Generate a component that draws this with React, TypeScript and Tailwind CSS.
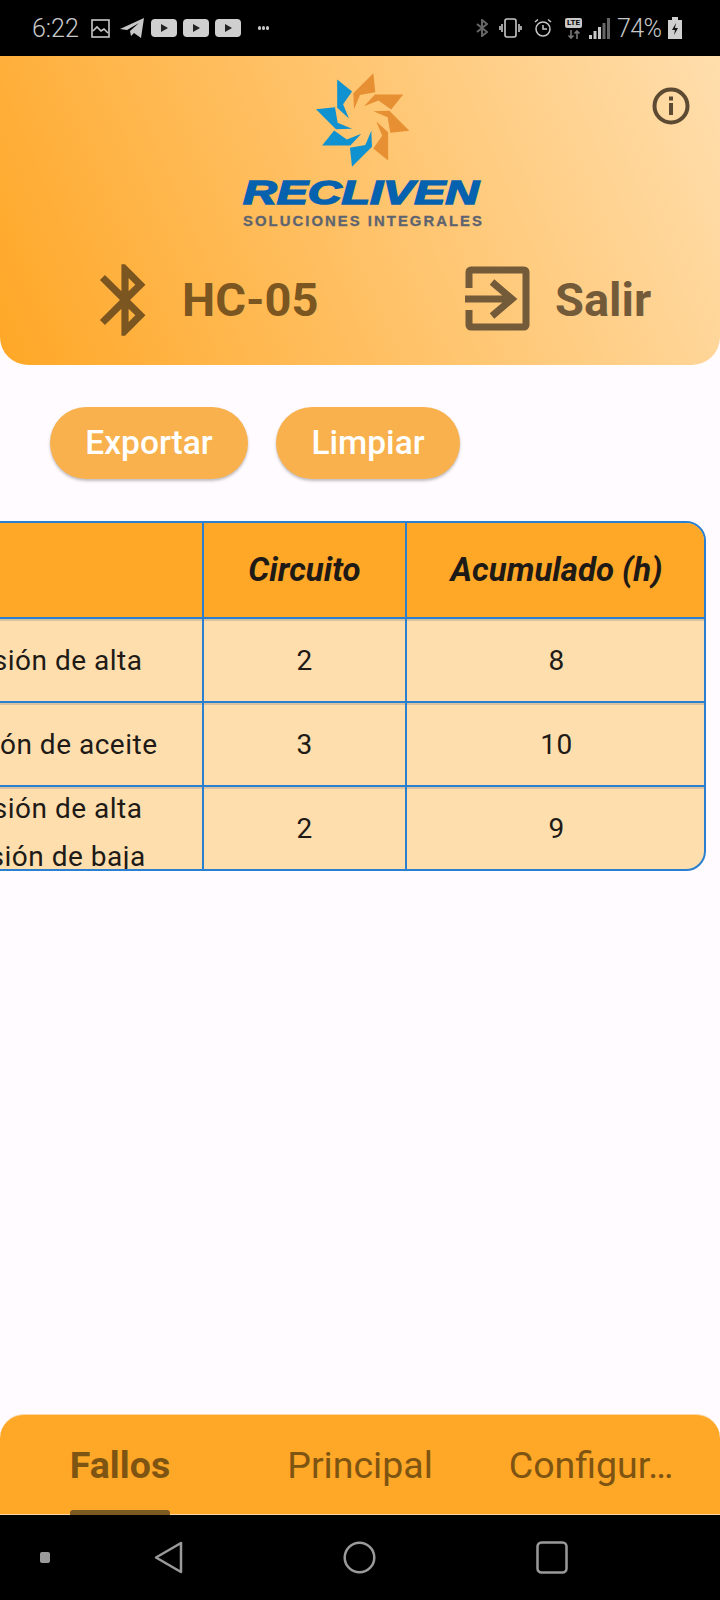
import React from "react";

const roboto = "font-['Roboto',sans-serif]";

const bladePoints = "460,40 466,97 420,105 402,148 400,100";

const Logo = () => (
    <svg width="244" height="160" viewBox="0 0 244 160" className="shrink-0">
        <g transform="translate(-20 -10) scale(0.3333)">
            {[0, 45, 90, 135, 180, 225, 270, 315].map((angle) => (
                <polygon
                    key={angle}
                    points={bladePoints}
                    fill={angle < 180 ? "#e68f33" : "#0f92cf"}
                    transform={`rotate(${angle} 428 180)`}
                />
            ))}
        </g>
        <text
            x="3"
            y="134"
            textLength="236"
            lengthAdjust="spacingAndGlyphs"
            fontFamily="'Liberation Sans', sans-serif"
            fontWeight="700"
            fontStyle="italic"
            fontSize="33"
            fill="#0661ae"
            stroke="#0661ae"
            strokeWidth="1.500"
        >
            RECLIVEN
        </text>
        <text
            x="3"
            y="156"
            textLength="241"
            lengthAdjust="spacingAndGlyphs"
            fontFamily="'Liberation Sans', sans-serif"
            fontWeight="700"
            fontSize="14.500"
            letterSpacing="2"
            fill="#5d6470"
            stroke="#5d6470"
            strokeWidth="0.300"
        >
            SOLUCIONES INTEGRALES
        </text>
    </svg>
);

const YoutubeIcon = () => (
    <svg width="26" height="18" viewBox="0 0 26 18">
        <rect width="26" height="18" rx="4" fill="#cfcfcf" />
        <path d="M10 5l7 4-7 4z" fill="#222" />
    </svg>
);

const StatusBar = () => (
    <div className={`h-14 shrink-0 bg-black flex items-center pl-8 text-[#c8c8c8] ${roboto}`}>
        <span className="text-[25px] leading-none w-[59px] font-light">6:22</span>
        <svg width="19" height="19" viewBox="0 0 19 19" fill="none" stroke="#c8c8c8" strokeWidth="1.6">
            <rect x="1" y="1" width="17" height="17" />
            <path d="M2 12l4-4 4 4 3-2 4 4" />
        </svg>
        <svg width="24" height="20" viewBox="0 0 24 20" className="ml-[10px]">
            <path d="M0 11L24 0l-3 20-7-5-3 3-1-5 9-8-12 7z" fill="#c8c8c8" />
        </svg>
        <div className="flex gap-[6px] ml-[7px]">
            <YoutubeIcon />
            <YoutubeIcon />
            <YoutubeIcon />
        </div>
        <div className="flex gap-[1px] ml-[17px]">
            <span className="w-[3px] h-[4px] rounded-full bg-[#c8c8c8]" />
            <span className="w-[3px] h-[4px] rounded-full bg-[#c8c8c8]" />
            <span className="w-[3px] h-[4px] rounded-full bg-[#c8c8c8]" />
        </div>
        <svg width="12" height="18" viewBox="0 0 12 18" fill="none" stroke="#666" strokeWidth="2" className="ml-[207px]">
            <path d="M1 5l10 8-5 4V1l5 4-10 8" />
        </svg>
        <svg width="23" height="20" viewBox="0 0 23 20" fill="none" stroke="#c8c8c8" strokeWidth="1.6" className="ml-[11px]">
            <rect x="6" y="1" width="11" height="18" rx="2" />
            <path d="M3 6v8M1 8v4M20 6v8M22 8v4" />
        </svg>
        <svg width="18" height="20" viewBox="0 0 18 20" fill="none" stroke="#c8c8c8" strokeWidth="1.5" className="ml-[12px]">
            <circle cx="9" cy="11" r="7" />
            <path d="M9 7v4h4M1 4l3-2.500M17 4l-3-2.500" />
        </svg>
        <div className="flex flex-col items-center w-[17px] ml-[13px] gap-[2px]">
            <span className="w-[17px] h-[10px] rounded-[2px] bg-[#c8c8c8] text-black text-[8px] leading-[10px] font-bold text-center">LTE</span>
            <svg width="14" height="9" viewBox="0 0 14 9" fill="none" stroke="#777" strokeWidth="1.6">
                <path d="M4 0v8M1.500 5.500L4 8l2.500-2.500M10 9V1M7.500 3.500L10 1l2.500 2.500" />
            </svg>
        </div>
        <svg width="21" height="21" viewBox="0 0 21 21" className="ml-[7px]">
            <path d="M0 17h3v4H0zM4.500 13h3v8h-3zM9 9h3v12H9z" fill="#c8c8c8" />
            <path d="M13.500 5h3v16h-3zM18 0h3v21h-3z" fill="#666" />
        </svg>
        <span className="text-[25px] leading-none ml-[7px] w-[42px] font-light tracking-tight">74%</span>
        <svg width="14" height="22" viewBox="0 0 14 22" className="ml-[9px]">
            <path d="M4 0h6v3h4v19H0V3h4z" fill="#cfcfcf" />
            <path d="M8 6L4 13h3l-1 5 4-7H7z" fill="#111" />
        </svg>
    </div>
);

const Header = () => (
    <div className={`relative h-[309px] shrink-0 rounded-b-[28px] bg-[linear-gradient(67deg,#ffa726,#ffdead)] flex flex-col items-center ${roboto}`}>
        <div className="mt-[14px] ml-[3px] h-[160px] flex">
            <Logo />
        </div>
        <svg width="38" height="38" viewBox="0 0 38 38" fill="none" className="absolute left-[652px] top-[31px]">
            <circle cx="19" cy="19" r="16.500" stroke="#5d4a33" strokeWidth="4" />
            <rect x="17" y="16" width="4" height="12" fill="#5d4a33" />
            <rect x="17" y="9.500" width="4" height="4" fill="#5d4a33" />
        </svg>
        <div className="w-full flex items-center mt-[27px]">
            <svg width="86" height="86" viewBox="0 0 24 24" fill="#7b5620" className="ml-[82px] shrink-0">
                <path d="M17.710 7.710L12 2h-1v7.590L6.410 5 5 6.410 10.590 12 5 17.590 6.410 19 11 14.410V22h1l5.710-5.710-4.300-4.290 4.300-4.290zM13 5.830l1.880 1.880L13 9.590V5.830zm1.880 10.460L13 18.170v-3.760l1.880 1.880z" />
            </svg>
            <span className="ml-[14px] mb-[2px] text-[47px] leading-none font-bold text-[#7b5620] w-[148px]">HC-05</span>
            <svg width="65" height="65" viewBox="0 0 65 65" fill="none" stroke="#735b3a" strokeWidth="7" className="ml-[135px] mb-[3px] shrink-0">
                <path d="M4 22V6a2 2 0 0 1 2-2h53a2 2 0 0 1 2 2v53a2 2 0 0 1-2 2H6a2 2 0 0 1-2-2V44" />
                <path d="M0 33h46M27 16l20 17-20 17" />
            </svg>
            <span className="ml-[25px] mb-[2px] text-[47px] leading-none font-bold text-[#735b3a]">Salir</span>
        </div>
    </div>
);

const rowCell = "flex justify-center text-[28px] leading-[48px] text-[#201a17] tracking-[0.5px] text-center overflow-hidden shadow-[inset_0_2px_0_#d9c2a0]";

const rows = [
    { name: ["Presión de alta"], circuit: "2", total: "8" },
    { name: ["Presión de aceite"], circuit: "3", total: "10" },
    { name: ["Presión de alta", "Presión de baja"], circuit: "2", total: "9" },
];

const FaultTable = () => (
    <div className={`overflow-hidden flex justify-end pr-[14px] mt-[42px] ${roboto}`}>
        <div className="w-[818px] shrink-0 h-[350px] border-2 border-[#2a7fd0] rounded-r-[20px] overflow-hidden bg-[#ffdead] flex flex-col">
            <div className="h-[96px] shrink-0 bg-[#ffa726] flex border-b-2 border-[#2a7fd0] text-[33px] font-bold italic text-[#201a17]">
                <div className="w-[312px] shrink-0" />
                <div className="w-[203px] shrink-0 border-l-2 border-[#2a7fd0] flex items-center justify-center">Circuito</div>
                <div className="flex-1 border-l-2 border-[#2a7fd0] flex items-center justify-center pl-[2px]">Acumulado (h)</div>
            </div>
            {rows.map((row, index) => (
                <div key={index} className={`h-[84px] shrink-0 flex ${index < 2 ? "border-b-2 border-[#2a7fd0]" : ""}`}>
                    <div className={`w-[312px] shrink-0 flex-col items-center ${rowCell} ${row.name.length > 1 ? "pt-[8px]" : "justify-center pt-[2px]"}`}>
                        {row.name.map((line) => (
                            <div key={line} className="shrink-0">{line}</div>
                        ))}
                    </div>
                    <div className={`w-[203px] shrink-0 border-l-2 border-[#2a7fd0] items-center ${index < 2 ? "pt-[2px]" : ""} ${rowCell}`}>{row.circuit}</div>
                    <div className={`flex-1 border-l-2 border-[#2a7fd0] items-center pl-[2px] ${index < 2 ? "pt-[2px]" : ""} ${rowCell}`}>{row.total}</div>
                </div>
            ))}
        </div>
    </div>
);

const BottomTabs = () => (
    <div className={`h-[101px] shrink-0 rounded-t-[24px] bg-[#ffa726] border-t border-b border-[#fbd9a6] flex text-[#7d5412] text-[37.5px] leading-none ${roboto}`}>
        <div className="relative w-[240px] flex justify-center pt-[32px]">
            <span className="font-bold">Fallos</span>
            <span className="absolute -bottom-px left-[70px] w-[100px] h-[5px] rounded-t-[3px] bg-[#7d5a22]" />
        </div>
        <div className="w-[240px] flex justify-center pt-[32px]">Principal</div>
        <div className="w-[240px] flex justify-center pt-[32px] pr-[18px]">Configur…</div>
    </div>
);

const NavigationBar = () => (
    <div className="h-[85px] shrink-0 bg-black flex items-center">
        <span className="ml-[40px] w-[10px] h-[11px] rounded-[2px] bg-[#9a9a9a]" />
        <svg width="30" height="33" viewBox="0 0 30 33" fill="none" stroke="#9a9a9a" strokeWidth="2.500" strokeLinejoin="round" className="ml-[104px]">
            <path d="M27 2v29L2 16.500z" />
        </svg>
        <svg width="33" height="33" viewBox="0 0 33 33" fill="none" stroke="#9a9a9a" strokeWidth="2.500" className="ml-[159px]">
            <circle cx="16.500" cy="16.500" r="14.800" />
        </svg>
        <svg width="32" height="33" viewBox="0 0 32 33" fill="none" stroke="#9a9a9a" strokeWidth="2.500" className="ml-[160px]">
            <rect x="1.500" y="1.500" width="29" height="30" rx="4" />
        </svg>
    </div>
);

const App: React.FC = () => {
    return (
        <div className="w-[720px] h-[1600px] bg-[#fffbff] flex flex-col overflow-hidden">
            <StatusBar />
            <Header />
            <div className="flex-1 min-h-0">
                <div className={`flex gap-[28px] pl-[50px] pt-[42px] ${roboto}`}>
                    <button className="w-[198px] h-[72px] rounded-full bg-[#f8b14c] text-white text-[33.5px] font-medium shadow-[0_2px_3px_rgba(0,0,0,0.25)]">Exportar</button>
                    <button className="w-[184px] h-[72px] rounded-full bg-[#f8b14c] text-white text-[33.5px] font-medium shadow-[0_2px_3px_rgba(0,0,0,0.25)]">Limpiar</button>
                </div>
                <FaultTable />
            </div>
            <BottomTabs />
            <NavigationBar />
        </div>
    );
};

export default App;
